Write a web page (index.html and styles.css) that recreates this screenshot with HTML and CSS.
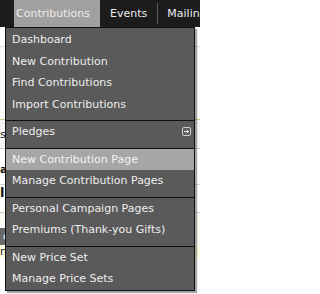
FILE: index.html
```html
<!DOCTYPE html>
<html>
<head>
<meta charset="utf-8">
<link rel="stylesheet" href="styles.css">
</head>
<body>
<nav class="topbar">
  <ul class="tabs">
    <li class="tab tab-active">Contributions</li>
    <li class="tab">Events</li>
    <li class="tab tab-sep">Mailings</li>
  </ul>
</nav>
<main class="page">
  <div class="row row-a"></div>
  <div class="row row-b"></div>
  <div class="row row-c"><span>s</span></div>
  <div class="row row-d"><span class="bold">a</span></div>
  <div class="row row-e"><span class="bold">l</span></div>
  <div class="row row-f"><span class="btn">o</span></div>
  <div class="row row-g"><span>n</span></div>
</main>
<div class="menu">
  <ul class="section">
    <li class="item">Dashboard</li>
    <li class="item">New Contribution</li>
    <li class="item">Find Contributions</li>
    <li class="item">Import Contributions</li>
  </ul>
  <ul class="section">
    <li class="item item-sub">Pledges
      <svg class="sub-icon" width="9" height="9" viewBox="0 0 9 9"><rect x="0.5" y="0.5" width="8" height="8" rx="1.5" fill="none" stroke="#d0d0d0" stroke-width="1"/><path d="M2 4.5H6.5M4.6 2.5L6.6 4.5L4.6 6.5" fill="none" stroke="#e8e8e8" stroke-width="1"/></svg>
    </li>
  </ul>
  <ul class="section">
    <li class="item item-hover">New Contribution Page</li>
    <li class="item">Manage Contribution Pages</li>
  </ul>
  <ul class="section">
    <li class="item">Personal Campaign Pages</li>
    <li class="item">Premiums (Thank-you Gifts)</li>
  </ul>
  <ul class="section section-last">
    <li class="item">New Price Set</li>
    <li class="item">Manage Price Sets</li>
  </ul>
</div>
</body>
</html>
```
FILE: styles.css
```css
html, body {
  margin: 0;
  padding: 0;
}
body {
  width: 200px;
  height: 294px;
  overflow: hidden;
  position: relative;
  background: #ffffff;
  font-family: "DejaVu Sans", Verdana, sans-serif;
  font-size: 11px;
}
ul {
  list-style: none;
  margin: 0;
  padding: 0;
}
.topbar {
  height: 27px;
  background: #1c1c1c;
}
.tabs {
  display: flex;
  height: 27px;
  padding-left: 14px;
  white-space: nowrap;
}
.tab {
  display: flex;
  align-items: center;
  color: #ececec;
  padding: 0 10px;
  height: 27px;
  font-size: 11px;
}
.tab-active {
  background: #a0a0a0;
  padding: 0 10px 0 2px;
}
.tab-sep {
  border-left: 1px solid #5a5a5a;
  height: 21px;
  margin-top: 3px;
  padding-left: 9px;
}
.page {
  display: flex;
  flex-direction: column;
  color: #222;
}
.row {
  display: flex;
  align-items: center;
  white-space: nowrap;
}
.row-a { height: 19px; border-bottom: 1px solid #dcdcdc; }
.row-b { height: 72px; border-bottom: 1px solid #c9c98a; background: #fafafa; }
.row-c { height: 28px; border-bottom: 1px solid #cfcfcf; background: #f6f6f6; }
.row-d { height: 35px; border-bottom: 1px solid #d8d8d8; }
.row-d span { margin-top: 6px; }
.row-e { height: 27px; border-bottom: 1px solid #d0d0c0; align-items: flex-start; }
.row-e span { margin-top: 0; font-size: 13px; }
.row-f { height: 32px; align-items: flex-end; background: #fbfbf4; }
.row-g { flex: 1; height: 48px; background: #fdfde4; align-items: center; }
.bold { font-weight: bold; color: #111; }
.btn {
  background: #6a6a6a;
  color: #fff;
  padding: 1px 3px;
  height: 15px;
  line-height: 15px;
}
.menu {
  position: absolute;
  top: 27px;
  left: 5px;
  width: 188px;
  background: #5a5a5a;
  border: 1px solid #101010;
  padding-top: 1px;
  box-shadow: 2px 2px 1px rgba(0, 0, 0, 0.35);
}
.section {
  padding-bottom: 5px;
  border-bottom: 1px solid #101010;
}
.section-last {
  padding-bottom: 0;
  border-bottom: none;
}
.item {
  height: 21.5px;
  line-height: 21.5px;
  padding-left: 6px;
  color: #eeeeee;
  white-space: nowrap;
  display: flex;
  align-items: center;
}
.item-sub {
  justify-content: space-between;
  padding-right: 3px;
}
.sub-icon {
  display: block;
}
.item-hover {
  background: #a6a6a6;
  color: #f4f4f4;
}
```
